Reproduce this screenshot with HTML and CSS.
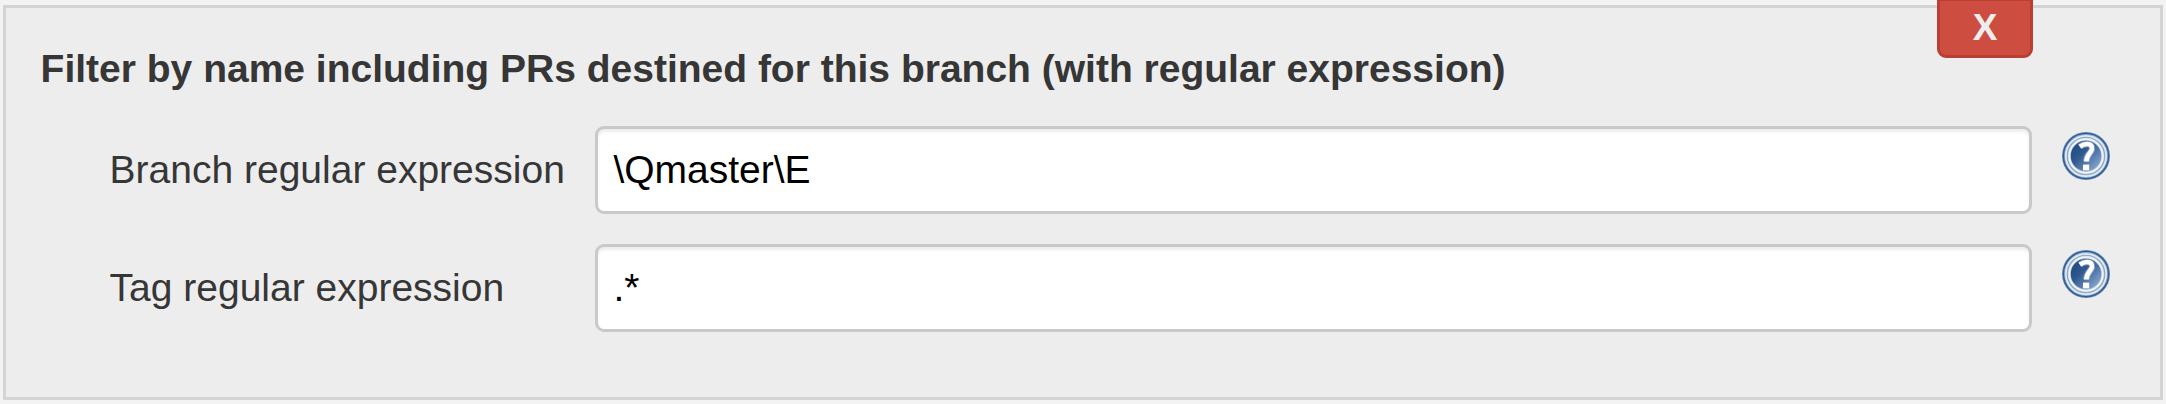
FILE: index.html
```html
<!DOCTYPE html>
<html lang="en">
<head>
<meta charset="utf-8">
<title>Filter by name</title>
<link rel="stylesheet" href="styles.css">
</head>
<body>
<svg class="defs" width="0" height="0" aria-hidden="true">
  <defs>
    <linearGradient id="disc" x1="0.1" y1="0.2" x2="0.85" y2="0.95">
      <stop offset="0" stop-color="#204a84"/>
      <stop offset="0.35" stop-color="#30598f"/>
      <stop offset="1" stop-color="#8eafd6"/>
    </linearGradient>
    <symbol id="help" viewBox="0 0 48 48">
      <circle cx="24" cy="24" r="24" fill="#6287b4"/>
      <circle cx="24" cy="24" r="23.2" fill="#2f5c94"/>
      <circle cx="24" cy="24" r="20.2" fill="#5c82b0" stroke="#8fabcb" stroke-width="3.4"/>
      <circle cx="24" cy="24" r="20.2" fill="none" stroke="#e3eaf3" stroke-width="1.7"/>
      <circle cx="24" cy="24" r="16.8" fill="url(#disc)" stroke="#b4c6dc" stroke-width="3.2"/>
      <circle cx="24" cy="24" r="16.8" fill="none" stroke="#f0f4f9" stroke-width="1.8"/>
      <path d="M17.8 14.6Q21.4 12 25 12C29.2 12 30.3 14.4 29.9 17.2C29.2 21.4 24.4 22 24.4 29.6" fill="none" stroke="#fff" stroke-opacity=".35" stroke-width="6.4"/>
      <path d="M17.8 14.6Q21.4 12 25 12C29.2 12 30.3 14.4 29.9 17.2C29.2 21.4 24.4 22 24.4 29.6" fill="none" stroke="#fff" stroke-width="4.6"/>
      <rect x="21" y="32.6" width="6.2" height="5.8" fill="#fff"/>
    </symbol>
  </defs>
</svg>
<section class="panel">
  <button class="delete" type="button">X</button>
  <h2 class="title">Filter by name including PRs destined for this branch (with regular expression)</h2>
  <div class="row">
    <label class="label" for="branch">Branch regular expression</label>
    <input class="field" id="branch" type="text" value="\Qmaster\E">
    <svg class="help"><use href="#help"/></svg>
  </div>
  <div class="row">
    <label class="label" for="tag">Tag regular expression</label>
    <input class="field" id="tag" type="text" value=".*">
    <svg class="help"><use href="#help"/></svg>
  </div>
</section>
</body>
</html>
```
FILE: styles.css
```css
* { box-sizing: border-box; }

body {
  margin: 0;
  height: 404px;
  padding: 5px 3px 4px;
  overflow: hidden;
  background: #f3f3f3;
  color: #363636;
  font: 39px/45px "Liberation Sans", Arial, sans-serif;
}

.defs { position: absolute; }

.panel {
  position: relative;
  height: 395px;
  padding: 38px 50px 0 34.6px;
  border: 3px solid #d4d4d4;
  background: #ededed;
}

/* Tab that hangs over the panel's top edge */
.delete {
  position: absolute;
  top: -10px;
  right: 127px;
  width: 96px;
  height: 60px;
  padding: 0;
  border: 3px solid #b93f35;
  border-radius: 0 0 9px 9px;
  background: #cd4d41;
  color: #eee;
  font: 700 37px/42px "Liberation Sans", Arial, sans-serif;
}

.title {
  margin: 0 0 35px;
  font-size: 39px;
  line-height: 45px;
  font-weight: bold;
  white-space: nowrap;
}

.row {
  display: flex;
  align-items: flex-start;
  margin-bottom: 30px;
  padding-left: 69px;
}

.label {
  flex: 0 0 485.4px;
  padding-top: 21px;
  white-space: nowrap;
}

.field {
  flex: 1;
  min-width: 0;
  height: 88px;
  margin-right: 30px;
  padding: 0 15.4px;
  border: 3px solid #c9c9c9;
  border-radius: 9px;
  background: #fff;
  box-shadow: inset 0 3px 3px rgba(0, 0, 0, 0.075);
  color: #000;
  font: inherit;
}

.help {
  flex: none;
  width: 48px;
  height: 48px;
  margin-top: 6px;
}
```
